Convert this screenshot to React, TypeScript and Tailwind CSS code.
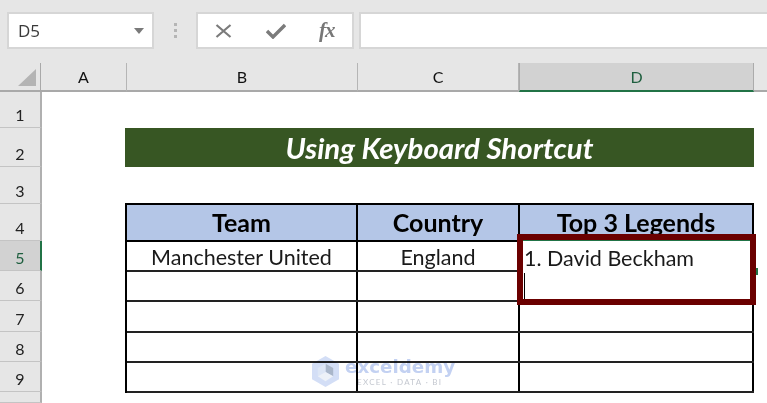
const columns = [
  { label: "A", width: "w-[86px]", active: false },
  { label: "B", width: "w-[231px]", active: false },
  { label: "C", width: "w-[161px]", active: false },
  { label: "D", width: "w-[235px]", active: true },
];

const rowHeaders = [
  { label: "1", height: "h-[36px]" },
  { label: "2", height: "h-[39px]" },
  { label: "3", height: "h-[37px]" },
  { label: "4", height: "h-[37px]" },
  { label: "5", height: "h-[30px]", active: true },
  { label: "6", height: "h-[30px]" },
  { label: "7", height: "h-[31px]" },
  { label: "8", height: "h-[30px]" },
  { label: "9", height: "h-[30px]" },
  { label: "", height: "h-[11px]" },
];

const cellRows = [
  { h: "h-[30px]", cells: ["Manchester United", "England", ""] },
  { h: "h-[30px]", cells: ["", "", ""] },
  { h: "h-[31px]", cells: ["", "", ""] },
  { h: "h-[30px]", cells: ["", "", ""] },
  { h: "h-[30px]", cells: ["", "", ""] },
];

const cellWidths = ["w-[231px]", "w-[162px]", "w-[234px]"];

export default function App() {
  return (
    <div className="relative w-[767px] h-[403px] overflow-hidden bg-white font-['Lato','Liberation_Sans',sans-serif] text-black">
      {/* Formula bar */}
      <div className="flex h-[63px] items-start bg-[#e6e6e6] pt-3 pl-[7px]">
        <div className="flex h-[37px] w-[147px] items-center justify-between border-2 border-[#d6d6d6] bg-white pl-[9px] pr-[8px]">
          <span className="font-['Open_Sans',sans-serif] text-[17px] text-[#3a3a3a]">D5</span>
          <svg width="10" height="6" viewBox="0 0 10 6">
            <path d="M0 0H10L5 6Z" fill="#7a7a7a" />
          </svg>
        </div>
        <div className="ml-[20px] mr-[19px] flex h-[37px] flex-col items-center justify-center gap-[3px]">
          <span className="block h-[3px] w-[3px] bg-[#b5b5b5]" />
          <span className="block h-[3px] w-[3px] bg-[#b5b5b5]" />
          <span className="block h-[3px] w-[3px] bg-[#b5b5b5]" />
        </div>
        <div className="flex h-[37px] w-[158px] items-center border-2 border-[#d6d6d6] bg-white pl-[17px]">
          <svg width="17" height="14" viewBox="0 0 17 14">
            <path d="M1.5 1L15.5 13M15.5 1L1.5 13" stroke="#7b7b7b" strokeWidth="2.2" fill="none" />
          </svg>
          <svg className="ml-[34px]" width="20" height="16" viewBox="0 0 20 16">
            <path d="M1 8L7 14L19 2" stroke="#7b7b7b" strokeWidth="3.4" fill="none" />
          </svg>
          <span className="ml-[33px] font-['Liberation_Serif',serif] text-[21px] font-bold italic leading-none tracking-[-1px] text-[#777]">
            fx
          </span>
        </div>
        <div className="ml-[5px] h-[37px] flex-1 border-y-2 border-l-2 border-[#d6d6d6] bg-white" />
      </div>

      {/* Column headers */}
      <div className="flex h-[29px] bg-[#e6e6e6]">
        <div className="flex w-[41px] items-end justify-end border-r border-b-2 border-[#a9a9a9] pr-[4px] pb-[4px]">
          <svg width="18" height="17" viewBox="0 0 18 17">
            <path d="M18 0V17H0Z" fill="#b4b4b4" />
          </svg>
        </div>
        {columns.map((c) =>
          c.active ? (
            <div
              key={c.label}
              className={`${c.width} flex items-center justify-center border-x border-b-2 border-x-[#ababab] border-b-[#217346] bg-[#d2d2d2] text-[16px] text-[#1f5f3f]`}
            >
              {c.label}
            </div>
          ) : (
            <div
              key={c.label}
              className={`${c.width} flex items-center justify-center border-r border-b-2 border-r-[#b5b5b5] border-b-[#a9a9a9] text-[16px] text-[#111]`}
            >
              {c.label}
            </div>
          )
        )}
        <div className="flex-1 border-b-2 border-[#a9a9a9]" />
      </div>

      {/* Sheet body */}
      <div className="flex">
        <div className="w-[42px] bg-[#e6e6e6]">
          {rowHeaders.map((r) => (
            <div
              key={r.label || "10"}
              className={`${r.height} flex items-end justify-center border-b border-r-2 border-b-[#c4c4c4] pb-[2px] text-[16px] leading-[20px] ${
                r.active ? "border-r-[#217346] bg-[#d2d2d2] text-[#1f5f3f]" : "border-r-[#b0b0b0] text-[#222]"
              }`}
            >
              {r.label}
            </div>
          ))}
        </div>

        <div className="pl-[83px] pt-[36px]">
          <div className="flex h-[39px] w-[629px] items-center justify-center bg-[#375623] text-[29.4px] font-bold italic leading-none text-white">
            Using Keyboard Shortcut
          </div>
          <div className="h-[36px]" />
          <div className="w-[629px] border-l-2 border-black">
            <div className="flex h-[39px] border-y-2 border-black bg-[#b4c6e7]">
              {["Team", "Country", "Top 3 Legends"].map((t, i) => (
                <div
                  key={t}
                  className={`${cellWidths[i]} flex items-center justify-center border-r-2 border-black text-[25px] font-bold leading-none`}
                >
                  {t}
                </div>
              ))}
            </div>
            {cellRows.map((row, ri) => (
              <div key={ri} className={`flex ${row.h} border-b-2 border-[#222]`}>
                {row.cells.map((t, i) => (
                  <div
                    key={i}
                    className={`${cellWidths[i]} flex items-center justify-center border-r-2 border-black pt-1 text-[21.5px] leading-none text-[#1a1a1a]`}
                  >
                    {t}
                  </div>
                ))}
              </div>
            ))}
          </div>
        </div>
      </div>

      {/* Highlighted edit cell */}
      <div className="absolute left-[517px] top-[234px] h-[71px] w-[239px] border-[6px] border-[#6b0000] bg-white">
        <div className="h-px bg-[#217346]" />
        <div className="pl-[1px] pt-[4px] text-[21.5px] leading-[26px] text-[#1a1a1a]">1. David Beckham</div>
        <div className="ml-[1px] mt-[2px] h-[26px] w-px bg-black" />
      </div>
      <div className="absolute left-[756px] top-[268px] h-[7px] w-[2px] bg-[#217346]" />

      {/* Watermark */}
      <div className="absolute left-[312px] top-[356px] flex items-center gap-[6px] mix-blend-multiply">
        <svg width="27" height="31" viewBox="0 0 28 32">
          <path d="M14 0L28 8V24L14 32L0 24V8Z" fill="#d3def6" />
          <path d="M14 8L22 12.5V21L14 16.5Z" fill="#a9b6ca" />
          <path d="M14 16.5L6 21V12.5L14 8Z" fill="#dde6f6" />
          <path d="M6 21L14 16.5L22 21L14 26Z" fill="#edf1f8" />
        </svg>
        <div className="flex flex-col">
          <span className="font-['DejaVu_Sans',sans-serif] text-[18.3px] font-bold leading-[20px] text-[#c3d1f2]">exceldemy</span>
          <span className="pl-[12px] text-[8px] leading-[10px] tracking-[1.3px] text-[#c4c8d0]">EXCEL · DATA · BI</span>
        </div>
      </div>
    </div>
  );
}
